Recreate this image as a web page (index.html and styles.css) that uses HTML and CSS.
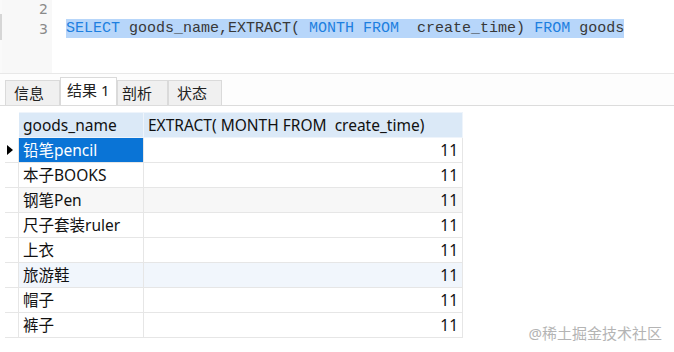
FILE: index.html
```html
<!DOCTYPE html>
<html lang="zh-CN">
<head>
    <meta charset="UTF-8">
    <title>查询结果</title>
    <link rel="stylesheet" href="styles.css">
</head>
<body>

<!-- SQL editor -->
<div class="editor">
    <div class="gutter">
        <div class="ln">2</div>
        <div class="ln">3</div>
    </div>
    <div class="code">
        <div class="line"></div>
        <div class="line"><span class="sel"><span class="kw">SELECT</span> goods_name,EXTRACT( <span class="kw">MONTH</span> <span class="kw">FROM</span>  create_time) <span class="kw">FROM</span> goods</span></div>
    </div>
</div>

<!-- Result tabs -->
<div class="tabs">
    <div class="tab tab-info">信息</div>
    <div class="tab tab-result active">结果 1</div>
    <div class="tab tab-profile">剖析</div>
    <div class="tab tab-status">状态</div>
</div>

<!-- Result grid -->
<div class="grid-wrap">
    <table class="grid">
        <thead>
            <tr>
                <th class="ind"></th>
                <th class="c1">goods_name</th>
                <th class="c2">EXTRACT( MONTH FROM&nbsp; create_time)</th>
            </tr>
        </thead>
        <tbody>
            <tr><td class="ind"><span class="arrow"></span></td><td class="c1 current">铅笔pencil</td><td class="num">11</td></tr>
            <tr><td class="ind"></td><td class="c1">本子BOOKS</td><td class="num">11</td></tr>
            <tr class="gray"><td class="ind"></td><td class="c1">钢笔Pen</td><td class="num">11</td></tr>
            <tr><td class="ind"></td><td class="c1">尺子套装ruler</td><td class="num">11</td></tr>
            <tr><td class="ind"></td><td class="c1">上衣</td><td class="num">11</td></tr>
            <tr class="tint"><td class="ind"></td><td class="c1">旅游鞋</td><td class="num">11</td></tr>
            <tr><td class="ind"></td><td class="c1">帽子</td><td class="num">11</td></tr>
            <tr><td class="ind"></td><td class="c1">裤子</td><td class="num">11</td></tr>
        </tbody>
    </table>
</div>

<div class="watermark">@稀土掘金技术社区</div>

</body>
</html>
```

FILE: styles.css
```css
body {
    margin: 0;
    padding: 0;
    background-color: #fff;
    font-family: "Noto Sans", "Noto Sans CJK SC", sans-serif;
    color: #111;
    position: relative;
    width: 674px;
    height: 352px;
    overflow: hidden;
}
.editor {
    display: flex;
    height: 73px;
    border-bottom: 1px solid #e8e8e8;
    overflow: hidden;
}
.gutter {
    width: 50px;
    background-color: #f8f8f8;
    border-left: 2px solid #fafafa;
    margin-top: -1px;
    position: relative;
}
.gutter::before {
    content: "";
    position: absolute;
    left: -2px;
    top: 15px;
    width: 2px;
    height: 26px;
    background-color: #d6d6d6;
}
.ln {
    height: 20px;
    line-height: 20px;
    text-align: right;
    padding-right: 4px;
    font-family: "DejaVu Sans", sans-serif;
    font-size: 14px;
    color: #8a8a8a;
}
.code {
    margin-top: -1px;
    padding-left: 14px;
    font-family: "Liberation Mono", monospace;
    font-size: 15px;
    color: #383838;
}
.line {
    height: 20px;
    line-height: 20px;
    white-space: pre;
}
.sel {
    background-color: #b7d6fa;
    display: inline-block;
    height: 19px;
}
.kw {
    color: #1d7fe0;
}
.tabs {
    display: flex;
    align-items: flex-end;
    height: 31px;
    padding-left: 5px;
    border-bottom: 1px solid #dcdcdc;
    background-color: #fdfdfd;
}
.tab {
    box-sizing: border-box;
    height: 25px;
    line-height: 24px;
    font-size: 15px;
    background-color: #f0f0f0;
    border: 1px solid #dadada;
    border-bottom: none;
    color: #222;
    white-space: nowrap;
}
.tab-info {
    width: 55px;
    padding-left: 8px;
}
.tab-result {
    width: 57px;
    padding-left: 6px;
}
.tab-profile {
    width: 51px;
    padding-left: 4px;
}
.tab-status {
    width: 54px;
    padding-left: 8px;
}
.tab.active {
    height: 28px;
    line-height: 25px;
    background-color: #fff;
}
.grid-wrap {
    padding: 6px 0 0 5px;
}
.grid {
    border-collapse: collapse;
    font-size: 15.5px;
}
.grid th,
.grid td {
    height: 24px;
    padding: 0 4px;
    border: 1px solid #e6e6e6;
    white-space: nowrap;
    font-weight: normal;
    text-align: left;
    line-height: 20px;
}
.grid th {
    background-color: #dbe9f7;
    border-color: #eef4fb;
}
.grid .ind {
    width: 12px;
    padding: 0;
    background-color: #fff;
    border-color: #fff #e6e6e6 #e6e6e6 #fff;
}
.grid th.ind {
    border-color: #fff;
}
.grid .c1 {
    width: 116px;
}
.grid .c2 {
    width: 310px;
}
.grid .num {
    text-align: right;
    padding-right: 4px;
}
.grid td.current {
    background-color: #0a74d6;
    color: #fff;
}
.grid tr.gray td:not(.ind) {
    background-color: #f7f7f7;
}
.grid tr.tint td:not(.ind) {
    background-color: #f1f6fc;
}
.arrow {
    display: block;
    width: 0;
    height: 0;
    margin-left: 1px;
    border-top: 5px solid transparent;
    border-bottom: 5px solid transparent;
    border-left: 6px solid #000;
}
.watermark {
    position: absolute;
    right: 12px;
    bottom: 9px;
    font-size: 15px;
    color: #b4b4b4;
}
```
